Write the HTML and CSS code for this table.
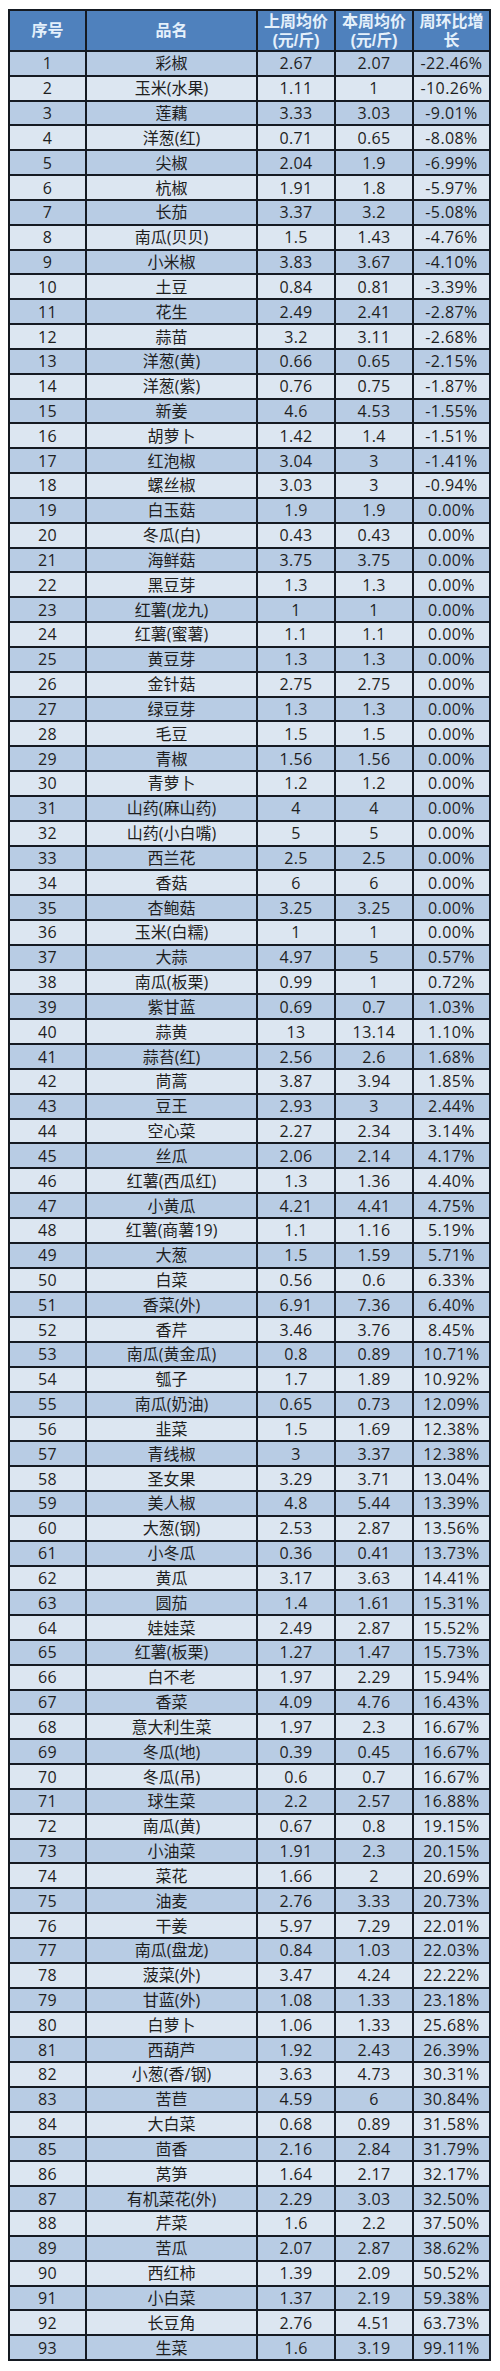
FILE: index.html
```html
<!DOCTYPE html>
<html lang="zh">
<head>
<meta charset="utf-8">
<link rel="stylesheet" href="styles.css">
</head>
<body>
<div class="table" id="t">
  <div class="h">序号</div>
  <div class="h">品名</div>
  <div class="h">上周均价<br>(元/斤)</div>
  <div class="h">本周均价<br>(元/斤)</div>
  <div class="h">周环比增<br>长</div>
</div>
<script src="app.js"></script>
</body>
</html>
```
FILE: app.js
```js
var d = [
["彩椒","2.67","2.07","-22.46%"],
["玉米(水果)","1.11","1","-10.26%"],
["莲藕","3.33","3.03","-9.01%"],
["洋葱(红)","0.71","0.65","-8.08%"],
["尖椒","2.04","1.9","-6.99%"],
["杭椒","1.91","1.8","-5.97%"],
["长茄","3.37","3.2","-5.08%"],
["南瓜(贝贝)","1.5","1.43","-4.76%"],
["小米椒","3.83","3.67","-4.10%"],
["土豆","0.84","0.81","-3.39%"],
["花生","2.49","2.41","-2.87%"],
["蒜苗","3.2","3.11","-2.68%"],
["洋葱(黄)","0.66","0.65","-2.15%"],
["洋葱(紫)","0.76","0.75","-1.87%"],
["新姜","4.6","4.53","-1.55%"],
["胡萝卜","1.42","1.4","-1.51%"],
["红泡椒","3.04","3","-1.41%"],
["螺丝椒","3.03","3","-0.94%"],
["白玉菇","1.9","1.9","0.00%"],
["冬瓜(白)","0.43","0.43","0.00%"],
["海鲜菇","3.75","3.75","0.00%"],
["黑豆芽","1.3","1.3","0.00%"],
["红薯(龙九)","1","1","0.00%"],
["红薯(蜜薯)","1.1","1.1","0.00%"],
["黄豆芽","1.3","1.3","0.00%"],
["金针菇","2.75","2.75","0.00%"],
["绿豆芽","1.3","1.3","0.00%"],
["毛豆","1.5","1.5","0.00%"],
["青椒","1.56","1.56","0.00%"],
["青萝卜","1.2","1.2","0.00%"],
["山药(麻山药)","4","4","0.00%"],
["山药(小白嘴)","5","5","0.00%"],
["西兰花","2.5","2.5","0.00%"],
["香菇","6","6","0.00%"],
["杏鲍菇","3.25","3.25","0.00%"],
["玉米(白糯)","1","1","0.00%"],
["大蒜","4.97","5","0.57%"],
["南瓜(板栗)","0.99","1","0.72%"],
["紫甘蓝","0.69","0.7","1.03%"],
["蒜黄","13","13.14","1.10%"],
["蒜苔(红)","2.56","2.6","1.68%"],
["茼蒿","3.87","3.94","1.85%"],
["豆王","2.93","3","2.44%"],
["空心菜","2.27","2.34","3.14%"],
["丝瓜","2.06","2.14","4.17%"],
["红薯(西瓜红)","1.3","1.36","4.40%"],
["小黄瓜","4.21","4.41","4.75%"],
["红薯(商薯19)","1.1","1.16","5.19%"],
["大葱","1.5","1.59","5.71%"],
["白菜","0.56","0.6","6.33%"],
["香菜(外)","6.91","7.36","6.40%"],
["香芹","3.46","3.76","8.45%"],
["南瓜(黄金瓜)","0.8","0.89","10.71%"],
["瓠子","1.7","1.89","10.92%"],
["南瓜(奶油)","0.65","0.73","12.09%"],
["韭菜","1.5","1.69","12.38%"],
["青线椒","3","3.37","12.38%"],
["圣女果","3.29","3.71","13.04%"],
["美人椒","4.8","5.44","13.39%"],
["大葱(钢)","2.53","2.87","13.56%"],
["小冬瓜","0.36","0.41","13.73%"],
["黄瓜","3.17","3.63","14.41%"],
["圆茄","1.4","1.61","15.31%"],
["娃娃菜","2.49","2.87","15.52%"],
["红薯(板栗)","1.27","1.47","15.73%"],
["白不老","1.97","2.29","15.94%"],
["香菜","4.09","4.76","16.43%"],
["意大利生菜","1.97","2.3","16.67%"],
["冬瓜(地)","0.39","0.45","16.67%"],
["冬瓜(吊)","0.6","0.7","16.67%"],
["球生菜","2.2","2.57","16.88%"],
["南瓜(黄)","0.67","0.8","19.15%"],
["小油菜","1.91","2.3","20.15%"],
["菜花","1.66","2","20.69%"],
["油麦","2.76","3.33","20.73%"],
["干姜","5.97","7.29","22.01%"],
["南瓜(盘龙)","0.84","1.03","22.03%"],
["菠菜(外)","3.47","4.24","22.22%"],
["甘蓝(外)","1.08","1.33","23.18%"],
["白萝卜","1.06","1.33","25.68%"],
["西葫芦","1.92","2.43","26.39%"],
["小葱(香/钢)","3.63","4.73","30.31%"],
["苦苣","4.59","6","30.84%"],
["大白菜","0.68","0.89","31.58%"],
["茴香","2.16","2.84","31.79%"],
["莴笋","1.64","2.17","32.17%"],
["有机菜花(外)","2.29","3.03","32.50%"],
["芹菜","1.6","2.2","37.50%"],
["苦瓜","2.07","2.87","38.62%"],
["西红柿","1.39","2.09","50.52%"],
["小白菜","1.37","2.19","59.38%"],
["长豆角","2.76","4.51","63.73%"],
["生菜","1.6","3.19","99.11%"]
];
var t = document.getElementById("t");
d.forEach(function (r, i) {
  var band = i % 2 === 0 ? " dark" : " light";
  [String(i + 1)].concat(r).forEach(function (v, j) {
    var c = document.createElement("div");
    c.className = (j === 1 ? "c name" : "c num") + band;
    c.textContent = v;
    t.appendChild(c);
  });
});
```
FILE: styles.css
```css
html, body {
  margin: 0;
  padding: 0;
  background: #ffffff;
}
body {
  padding: 9px 0 0 8px;
  font-family: "Open Sans", "Noto Sans CJK SC", sans-serif;
}
.table {
  display: grid;
  width: 483px;
  box-sizing: border-box;
  grid-template-columns: 75px 169px 76px 76px 75px;
  grid-template-rows: 39px repeat(93, 22.83px);
  gap: 2px;
  padding: 2px;
  background: #151a22;
}
.h {
  background: #4f81bd;
  color: #e4f0fb;
  font-family: "Liberation Sans", "Noto Sans CJK SC", sans-serif;
  font-weight: 700;
  font-size: 16px;
  line-height: 19px;
  display: flex;
  align-items: center;
  justify-content: center;
  text-align: center;
}
.c {
  display: flex;
  align-items: center;
  justify-content: center;
  font-size: 16px;
  line-height: 20px;
  color: #1e1e1e;
  white-space: nowrap;
}
.num {
  letter-spacing: 0.4px;
}
.dark { background: #b8cce4; }
.light { background: #dce6f1; }
```
